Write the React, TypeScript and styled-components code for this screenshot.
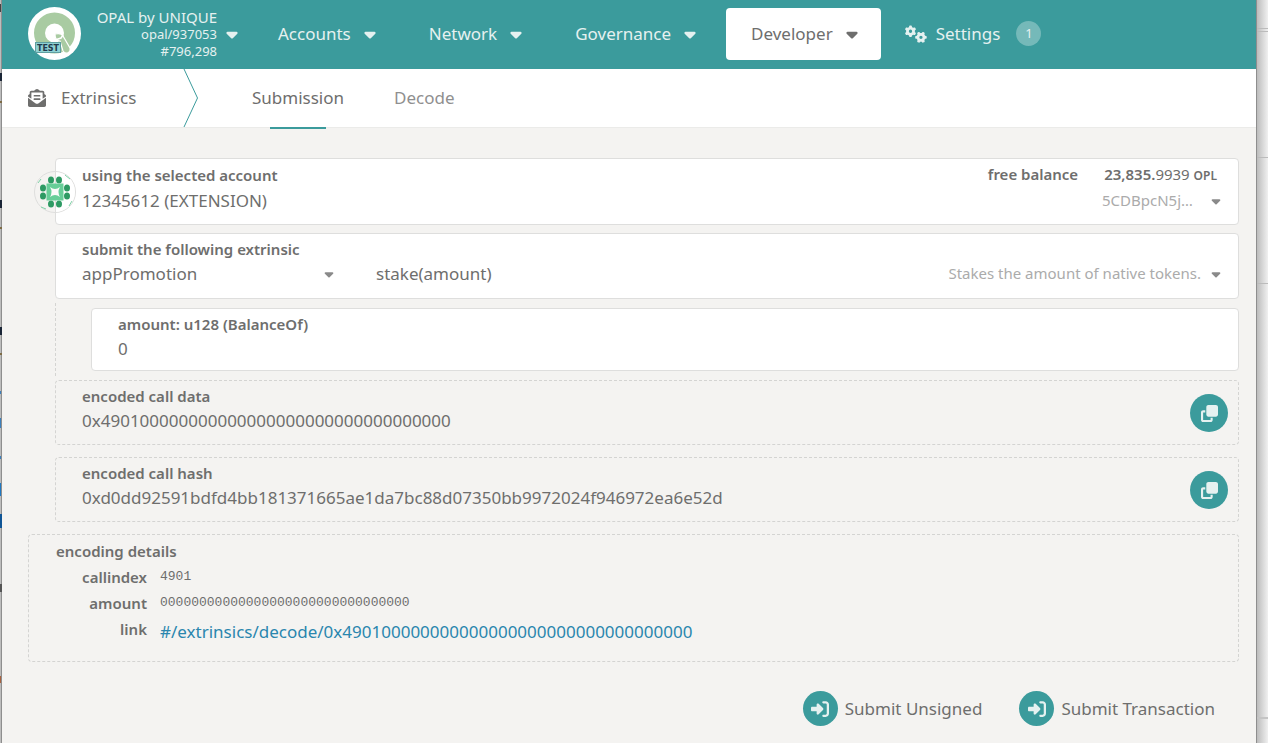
import React from 'react';
import styled, { createGlobalStyle, css } from 'styled-components';
import { FaEnvelopeOpenText } from 'react-icons/fa';
import { FaCaretDown, FaClone, FaGears, FaRightToBracket } from 'react-icons/fa6';

const teal = '#3b9b9c';
const ink = '#6e6e6d';
const dash = '#d4d4d2';

const GlobalStyle = createGlobalStyle`
  * { box-sizing: border-box; }
  body {
    margin: 0;
    background: #ececec;
    color: ${ink};
    font: 17px/24px 'Noto Sans', sans-serif;
  }
  button, input, select { font: inherit; color: inherit; }
`;

const Desktop = styled.div`
  display: flex;
  min-height: 100vh;
`;

const LeftEdge = styled.div`
  flex: none;
  width: 2px;
  background:
    linear-gradient(#444, #444) 0 4px / 1px 8px no-repeat,
    linear-gradient(#1a2536, #1a2536) 0 73px / 2px 8px no-repeat,
    linear-gradient(#7d6b45, #7d6b45) 0 101px / 2px 2px no-repeat,
    linear-gradient(#1a2536, #1a2536) 0 200px / 2px 8px no-repeat,
    linear-gradient(#7d6b45, #7d6b45) 0 227px / 2px 2px no-repeat,
    linear-gradient(#1a2536, #1a2536) 0 327px / 2px 8px no-repeat,
    linear-gradient(#7d6b45, #7d6b45) 0 353px / 2px 2px no-repeat,
    linear-gradient(#3c7fbb, #3c7fbb) 0 391px / 1px 3px no-repeat,
    linear-gradient(#3c7fbb, #3c7fbb) 0 418px / 1px 10px no-repeat,
    linear-gradient(#3c7fbb, #3c7fbb) 0 456px / 1px 3px no-repeat,
    linear-gradient(#1f78c2, #1f78c2) 0 483px / 1px 13px no-repeat,
    linear-gradient(#0f5596, #0f5596) 0 514px / 2px 14px no-repeat,
    linear-gradient(#555, #555) 0 584px / 2px 8px no-repeat,
    linear-gradient(#a8623f, #a8623f) 0 676px / 1px 7px no-repeat,
    linear-gradient(90deg, #bdbdbd 50%, #8e8e8e 50%);
`;

const RightEdge = styled.div`
  flex: none;
  width: 12px;
  border-left: 1px solid #8e8e8e;
  background:
    linear-gradient(#bbb, #bbb) 0 28px / 100% 1px no-repeat,
    linear-gradient(#bbb, #bbb) 0 31px / 100% 1px no-repeat,
    linear-gradient(#bbb, #bbb) 0 157px / 100% 1px no-repeat,
    linear-gradient(#bbb, #bbb) 0 283px / 100% 1px no-repeat,
    linear-gradient(#c4c4c4, #c4c4c4) 0 717px / 100% 2px no-repeat,
    linear-gradient(90deg, #bcbcbc, #f0f0f0);
`;

const Window = styled.div`
  flex: 1;
  min-width: 0;
  background: #f4f3f1;
`;

const TopBar = styled.header`
  display: flex;
  align-items: center;
  height: 69px;
  padding: 0 0 2px 26px;
  background: ${teal};
  color: #e5f1f0;
`;

const ChainButton = styled.button`
  display: flex;
  align-items: center;
  padding: 0;
  border: 0;
  background: none;
  text-align: right;
`;

const ChainText = styled.span`
  width: 136px;
  margin-right: 6px;
  padding-top: 1px;
  font-size: 13px;
  line-height: 17px;
`;

const ChainName = styled.span`
  display: block;
  font-size: 15px;
`;

const Caret = styled(FaCaretDown)<{ $small?: boolean }>`
  flex: none;
  width: ${p => (p.$small ? 14 : 18)}px;
  height: ${p => (p.$small ? 14 : 18)}px;
`;

const MainNav = styled.nav`
  display: flex;
  align-items: center;
  gap: 1px;
  margin-left: 12px;
`;

const NavButton = styled.button<{ $active?: boolean }>`
  display: flex;
  align-items: center;
  gap: 10px;
  height: 52px;
  padding: 0 24px 0 25px;
  border: 0;
  border-radius: 4px;
  background: none;
  ${p => p.$active && css`
    padding-right: 20px;
    margin-left: 2px;
    background: #fff;
    color: ${ink};
  `}
`;

const SettingsLink = styled.a`
  display: flex;
  align-items: center;
  gap: 9px;
  margin-left: 24px;
  color: inherit;
  text-decoration: none;
`;

const Badge = styled.span`
  width: 25px;
  height: 25px;
  margin-left: 7px;
  border-radius: 50%;
  background: #75b9b9;
  font-size: 13px;
  line-height: 25px;
  text-align: center;
`;

const TabBar = styled.nav`
  display: flex;
  height: 59px;
  padding-left: 26px;
  border-bottom: 1px solid #ebebe9;
  background: #fff;
`;

const Section = styled.div`
  display: flex;
  align-items: center;
  gap: 15px;
  width: 155px;
`;

const Chevron = styled.svg`
  display: block;
  width: 16px;
  height: 58px;
`;

const Tabs = styled.div`
  display: flex;
  gap: 50px;
  margin-left: 53px;
`;

const Tab = styled.a<{ $active?: boolean }>`
  position: relative;
  display: flex;
  align-items: center;
  color: ${p => (p.$active ? ink : '#8f8f8f')};
  text-decoration: none;
  ${p => p.$active && css`
    &::after {
      content: '';
      position: absolute;
      left: 50%;
      bottom: -2px;
      width: 56px;
      height: 2px;
      margin-left: -28px;
      background: ${teal};
    }
  `}
`;

const Content = styled.main`
  display: flex;
  flex-direction: column;
  padding: 30px 17px 16px 26px;
`;

const panel = css`
  position: relative;
  padding: 3px 15px 0 26px;
  border: 1px solid #dededd;
  border-radius: 4px;
  background: #fff;
`;

const Panel = styled.section<{ $height: number }>`
  ${panel}
  min-height: ${p => p.$height}px;
  margin: 0 0 8px 27px;
`;

const Params = styled.div`
  margin: -4px 0 4px 27px;
  padding: 5px 0 5px 35px;
  border-left: 1px dashed ${dash};
`;

const ParamPanel = styled.section`
  ${panel}
  min-height: 63px;
`;

const OutputPanel = styled.section`
  ${panel}
  display: flex;
  justify-content: space-between;
  min-height: 65px;
  margin: 0 0 12px 27px;
  padding-right: 10px;
  padding-bottom: 2px;
  border: 1px dashed ${dash};
  background: none;
`;

const Label = styled.label`
  display: block;
  font-size: 15px;
  font-weight: 600;
`;

const Line = styled.div`
  display: flex;
  align-items: center;
  justify-content: space-between;
`;

const PickerLine = styled.div`
  display: flex;
  gap: 40px;
`;

const Value = styled.output`
  display: block;
  line-height: 26px;
  overflow-wrap: anywhere;
`;

const Picker = styled.div<{ $width?: number }>`
  display: flex;
  align-items: center;
  flex: ${p => (p.$width ? 'none' : '1')};
  width: ${p => (p.$width ? p.$width + 'px' : 'auto')};
  height: 26px;
  svg { color: #8a8a8a; }
`;

const Select = styled.select`
  flex: 1;
  min-width: 0;
  padding: 0;
  border: 0;
  outline: 0;
  appearance: none;
  background: none;
`;

const Hint = styled.span`
  min-width: 99px;
  margin-right: 8px;
  padding-bottom: 2px;
  color: #ababab;
  font-size: 15px;
`;

const Balance = styled.div`
  display: flex;
  gap: 26px;
  margin-right: 6px;
  font-size: 15px;
  font-weight: 600;
  small { font-size: 15px; font-weight: 400; }
  abbr { font-size: 12px; }
`;

const Avatar = styled.svg`
  position: absolute;
  left: -22px;
  top: 12px;
  width: 42px;
  height: 42px;
`;

const AmountInput = styled.input`
  display: block;
  width: 100%;
  height: 25px;
  padding: 0;
  border: 0;
  outline: 0;
  background: none;
`;

const RoundIcon = styled.span<{ $size: number }>`
  display: flex;
  align-items: center;
  justify-content: center;
  width: ${p => p.$size}px;
  height: ${p => p.$size}px;
  border-radius: 50%;
  background: ${teal};
  color: #e5f1f0;
`;

const PlainButton = styled.button`
  display: flex;
  align-items: center;
  align-self: center;
  gap: 7px;
  padding: 0;
  border: 0;
  background: none;
`;

const Details = styled.section`
  min-height: 128px;
  padding: 3px 27px;
  border: 1px dashed ${dash};
  border-radius: 4px;
`;

const Heading = styled.h2`
  margin: 0;
  font-size: 15px;
  font-weight: 600;
  line-height: 26px;
`;

const DetailList = styled.dl`
  display: grid;
  grid-template-columns: 91px 1fr;
  column-gap: 13px;
  margin: 0;
`;

const Term = styled.dt`
  font-size: 15px;
  font-weight: 600;
  line-height: 26px;
  text-align: right;
`;

const Detail = styled.dd<{ $mono?: boolean }>`
  margin: 0;
  line-height: ${p => (p.$mono ? 26 : 32)}px;
  overflow-wrap: anywhere;
  ${p => p.$mono && css`
    font-family: 'Liberation Mono', monospace;
    font-size: 13px;
  `}
  a { color: #2a86ae; text-decoration: none; }
`;

const Actions = styled.div`
  display: flex;
  justify-content: flex-end;
  gap: 37px;
  padding: 29px 24px 0 0;
`;

const Logo = () => (
  <svg width="53" height="53" viewBox="0 0 53 53" aria-hidden="true">
    <circle cx="26.5" cy="26.5" r="26.5" fill="#fff" />
    <circle cx="26.5" cy="26" r="15" fill="none" stroke="#a9cba2" strokeWidth="11" />
    <path d="M27 27 C31 26 34 27 35 29 L42 41 C43 46 38 48 35 44 L32 34 C29 34 27 32 27 27 Z" fill="#a9cba2" stroke="#fff" strokeWidth="1.2" />
    <path d="M27 33 L33 31 L35 28" fill="none" stroke="#fff" strokeWidth="1.5" />
    <rect x="7.5" y="35.5" width="25" height="10" fill="#8ed0d2" stroke="#5f9fa1" />
    <text x="20" y="43.5" textAnchor="middle" fontSize="8" fontWeight="700" fontFamily="DejaVu Sans" fill="#233a4c">TEST</text>
  </svg>
);

const dots = [[17, 9], [25, 9], [9, 17], [9, 25], [33, 17], [33, 25], [17, 33], [25, 33]];

const Identicon = () => (
  <Avatar viewBox="0 0 42 42" aria-hidden="true">
    <circle cx="21" cy="21" r="20.5" fill="#f4f3f1" stroke="#dededd" />
    <path d="M21 1 A20 20 0 0 1 21 41 Z" fill="#fff" />
    <path d="M4 12 L7 8 M31 4 L36 8 M38 30 L35 35 M7 36 L12 38" stroke="#7fd3a8" />
    <path d="M21.5 1 V41" stroke="#dededd" />
    {dots.map(([x, y]) => <ellipse key={x + '-' + y} cx={x} cy={y} rx="3" ry="3.6" fill="#2d9a63" />)}
    <rect x="12.5" y="12.5" width="17" height="17" fill="#67ce98" />
    <path d="M16 16 Q21 20 26 16 Q23 21 26 26 Q21 22 16 26 Q19 21 16 16 Z" fill="#fbfbfa" />
  </Avatar>
);

const Output = ({ id, label, value }: { id: string; label: string; value: string }) => (
  <OutputPanel>
    <div>
      <Label htmlFor={id}>{label}</Label>
      <Value id={id}>{value}</Value>
    </div>
    <PlainButton aria-label={'copy ' + label}>
      <RoundIcon $size={38}><FaClone size={17} /></RoundIcon>
    </PlainButton>
  </OutputPanel>
);

const amountHex = '0'.repeat(32);
const callData = '0x4901' + amountHex;

export default function App() {
  return (
    <Desktop>
      <GlobalStyle />
      <LeftEdge />
      <Window>
        <TopBar>
          <ChainButton>
            <Logo />
            <ChainText>
              <ChainName>OPAL by UNIQUE</ChainName>
              opal/937053<br />#796,298
            </ChainText>
            <Caret />
          </ChainButton>
          <MainNav>
            <NavButton>Accounts <Caret /></NavButton>
            <NavButton>Network <Caret /></NavButton>
            <NavButton>Governance <Caret /></NavButton>
            <NavButton $active>Developer <Caret /></NavButton>
          </MainNav>
          <SettingsLink href="#/settings"><FaGears size={22} />Settings<Badge>1</Badge></SettingsLink>
        </TopBar>
        <TabBar>
          <Section><FaEnvelopeOpenText size={18} />Extrinsics</Section>
          <Chevron viewBox="0 0 16 58"><path d="M1 0 L14.5 29 L1 58" fill="none" stroke={teal} /></Chevron>
          <Tabs>
            <Tab href="#/extrinsics" $active>Submission</Tab>
            <Tab href="#/extrinsics/decode">Decode</Tab>
          </Tabs>
        </TabBar>
        <Content>
          <Panel $height={67}>
            <Identicon />
            <Line>
              <Label htmlFor="account">using the selected account</Label>
              <Balance>
                <span>free balance</span>
                <span>23,835.<small>9939</small> <abbr>OPL</abbr></span>
              </Balance>
            </Line>
            <Picker>
              <Select id="account"><option>12345612 (EXTENSION)</option></Select>
              <Hint>5CDBpcN5j…</Hint>
              <Caret $small />
            </Picker>
          </Panel>
          <Panel $height={66}>
            <Label htmlFor="pallet">submit the following extrinsic</Label>
            <PickerLine>
              <Picker $width={254}>
                <Select id="pallet"><option>appPromotion</option></Select>
                <Caret $small />
              </Picker>
              <Picker>
                <Select aria-label="call"><option>stake(amount)</option></Select>
                <Hint>Stakes the amount of native tokens.</Hint>
                <Caret $small />
              </Picker>
            </PickerLine>
          </Panel>
          <Params>
            <ParamPanel>
              <Label htmlFor="amount">amount: u128 (BalanceOf)</Label>
              <AmountInput id="amount" defaultValue="0" />
            </ParamPanel>
          </Params>
          <Output id="call-data" label="encoded call data" value={callData} />
          <Output
            id="call-hash"
            label="encoded call hash"
            value="0xd0dd92591bdfd4bb181371665ae1da7bc88d07350bb9972024f946972ea6e52d"
          />
          <Details>
            <Heading>encoding details</Heading>
            <DetailList>
              <Term>callindex</Term>
              <Detail $mono>4901</Detail>
              <Term>amount</Term>
              <Detail $mono>{amountHex}</Detail>
              <Term>link</Term>
              <Detail><a href={'#/extrinsics/decode/' + callData}>#/extrinsics/decode/{callData}</a></Detail>
            </DetailList>
          </Details>
          <Actions>
            <PlainButton><RoundIcon $size={35}><FaRightToBracket size={18} /></RoundIcon>Submit Unsigned</PlainButton>
            <PlainButton><RoundIcon $size={35}><FaRightToBracket size={18} /></RoundIcon>Submit Transaction</PlainButton>
          </Actions>
        </Content>
      </Window>
      <RightEdge />
    </Desktop>
  );
}
